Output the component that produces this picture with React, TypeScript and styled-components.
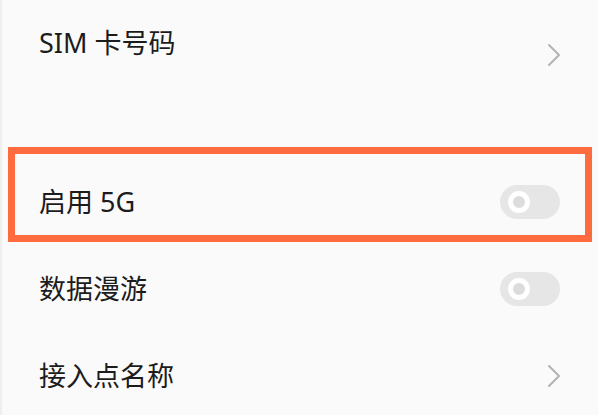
import React from 'react';
import styled, { createGlobalStyle } from 'styled-components';

const GlobalStyle = createGlobalStyle`
  html, body {
    margin: 0;
    padding: 0;
    background: #fafafa;
  }
  body {
    font-family: "Noto Sans", "Noto Sans CJK SC", sans-serif;
    -webkit-font-smoothing: antialiased;
  }
`;

const Page = styled.div`
  width: 598px;
  height: 415px;
  overflow: hidden;
  background: #fafafa;
  border-left: 2px solid #efefef;
  box-sizing: border-box;
`;

const Section = styled.div<{ $gap?: number }>`
  display: flex;
  flex-direction: column;
  margin-top: ${(p) => p.$gap ?? 0}px;
`;

const Row = styled.div<{ $height: number }>`
  position: relative;
  display: flex;
  align-items: center;
  justify-content: space-between;
  height: ${(p) => p.$height}px;
  padding: 0 37px 0 37px;
  box-sizing: border-box;
`;

const LabelStack = styled.div<{ $pushUp?: number }>`
  display: flex;
  flex-direction: column;
  padding-bottom: ${(p) => p.$pushUp ?? 0}px;
`;

const Title = styled.span`
  font-size: 27px;
  line-height: 36px;
  color: #1c1c1c;
  font-family: "Noto Sans", "Noto Sans CJK SC", sans-serif;
`;

const Highlight = styled.div`
  position: absolute;
  top: -11px;
  bottom: 3px;
  left: 6px;
  right: 6px;
  border: 7px solid #fd6b3e;
  pointer-events: none;
`;

const Track = styled.div`
  position: relative;
  width: 60px;
  height: 34px;
  margin-right: 1px;
  border-radius: 17px;
  background: #e6e6e6;
`;

const Knob = styled.div`
  position: absolute;
  top: 6px;
  left: 8px;
  width: 22px;
  height: 22px;
  box-sizing: border-box;
  border-radius: 50%;
  border: 5.5px solid #ffffff;
  background: #dcdcdc;
`;

const Chevron = () => (
  <svg width="14" height="24" viewBox="0 0 14 24">
    <path d="M2 2 L12 12 L2 22" fill="none" stroke="#b3b3b3" strokeWidth="2" strokeLinecap="round" strokeLinejoin="round" />
  </svg>
);

const Toggle = () => (
  <Track>
    <Knob />
  </Track>
);

export default function App() {
  return (
    <>
      <GlobalStyle />
      <Page>
        <Section>
          <Row $height={110}>
            <LabelStack $pushUp={24}>
              <Title>SIM 卡号码</Title>
            </LabelStack>
            <Chevron />
          </Row>
        </Section>
        <Section $gap={48}>
          <Row $height={87}>
            <LabelStack>
              <Title>启用 5G</Title>
            </LabelStack>
            <Toggle />
            <Highlight />
          </Row>
          <Row $height={87}>
            <LabelStack>
              <Title>数据漫游</Title>
            </LabelStack>
            <Toggle />
          </Row>
          <Row $height={87}>
            <LabelStack>
              <Title>接入点名称</Title>
            </LabelStack>
            <Chevron />
          </Row>
        </Section>
      </Page>
    </>
  );
}
